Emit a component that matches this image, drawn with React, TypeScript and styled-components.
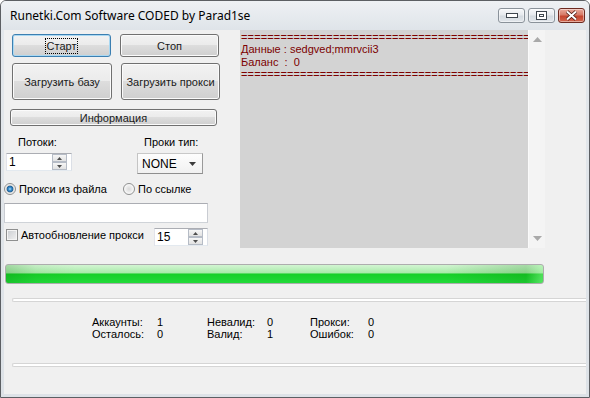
import styled, { createGlobalStyle } from 'styled-components';

const GlobalStyle = createGlobalStyle`
  html, body {
    margin: 0;
    padding: 0;
    background: #ffffff;
  }
  body {
    font-family: "Liberation Sans", Arial, sans-serif;
    font-size: 11px;
    color: #000;
  }
  * {
    box-sizing: border-box;
  }
`;

const Window = styled.div`
  width: 590px;
  height: 398px;
  border: 1px solid #5c5f63;
  border-radius: 6px 6px 0 0;
  background: linear-gradient(#e4e8ec, #dde2e7);
  display: flex;
  flex-direction: column;
  overflow: hidden;
`;

const TitleBar = styled.div`
  height: 29px;
  flex: none;
  display: flex;
  align-items: flex-start;
  padding-left: 9px;
  background: linear-gradient(#eef1f4, #dfe4e9);
`;

const Title = styled.span`
  margin-top: 6px;
  font-family: "Noto Sans", "Open Sans", sans-serif;
  font-size: 12px;
  line-height: 17px;
  color: #000;
`;

const Caption = styled.div`
  margin-left: auto;
  margin-top: 7px;
  margin-right: 4px;
  display: flex;
  gap: 3px;
`;

const CaptionButton = styled.div<{ $close?: boolean }>`
  width: 27px;
  height: 15px;
  border-radius: 3px;
  border: 1px solid ${(p) => (p.$close ? '#6c2a20' : '#8a929a')};
  background: ${(p) =>
    p.$close
      ? 'linear-gradient(#e9a99b, #d77a66 45%, #c5452f 55%, #d2674f)'
      : 'linear-gradient(#f7f8fa, #e6eaee 45%, #d4dae0 55%, #e2e7ec)'};
  box-shadow: inset 0 0 0 1px rgba(255, 255, 255, 0.45);
  display: flex;
  align-items: center;
  justify-content: center;
`;

const Client = styled.div`
  flex: 1;
  margin: 0 3px 3px;
  background: #f0f0f0;
  display: flex;
  flex-direction: column;
`;

const Top = styled.div`
  display: flex;
  height: 218px;
  flex: none;
`;

const LeftPanel = styled.div`
  width: 236px;
  display: flex;
  flex-direction: column;
`;

const Row = styled.div<{ $top: number; $left?: number; $gap?: number }>`
  display: flex;
  align-items: flex-start;
  margin-top: ${(p) => p.$top}px;
  padding-left: ${(p) => p.$left ?? 0}px;
  gap: ${(p) => p.$gap ?? 0}px;
`;

const Button = styled.button<{ $w: number; $h: number; $default?: boolean }>`
  width: ${(p) => p.$w}px;
  height: ${(p) => p.$h}px;
  padding: 0;
  border: 1px solid ${(p) => (p.$default ? '#3c7fb1' : '#707070')};
  border-radius: 3px;
  background: linear-gradient(#f2f2f2 0%, #ebebeb 49%, #dddddd 50%, #cfcfcf 100%);
  box-shadow: inset 0 0 0 1px ${(p) => (p.$default ? '#a9d8f2' : '#fbfbfb')};
  font-family: "Liberation Sans", Arial, sans-serif;
  font-size: 11px;
  color: #1a1a1a;
  display: flex;
  align-items: center;
  justify-content: center;
`;

const FocusRect = styled.span`
  border: 1px dotted #000;
  padding: 1px 1px 0;
  line-height: 13px;
`;

const Label = styled.span<{ $w?: number }>`
  width: ${(p) => (p.$w ? `${p.$w}px` : 'auto')};
  line-height: 13px;
`;

const Spin = styled.div<{ $w: number }>`
  width: ${(p) => p.$w}px;
  height: 18px;
  display: flex;
  background: #fff;
  border: 1px solid;
  border-color: #abadb3 #dbdfe6 #e3e9ef #e2e3ea;
`;

const SpinValue = styled.span`
  flex: 1;
  padding-left: 2px;
  font-size: 12px;
  line-height: 16px;
`;

const SpinButtons = styled.div`
  width: 15px;
  margin: 0 4px 0 0;
  display: flex;
  flex-direction: column;
`;

const SpinPart = styled.div`
  flex: 1;
  border: 1px solid #b6bcc6;
  background: linear-gradient(#f6f6f6, #e2e2e2);
  display: flex;
  align-items: center;
  justify-content: center;
`;

const Combo = styled.div`
  width: 66px;
  height: 21px;
  border: 1px solid;
  border-color: #c8c8c8 #9a9a9a #8f8f8f #c4c4c4;
  background: linear-gradient(#fdfdfd, #f1f1f1);
  display: flex;
  align-items: center;
  padding: 0 6px 0 4px;
  font-size: 12px;
`;

const ComboArrow = styled.span`
  margin-left: auto;
  display: flex;
`;

const Option = styled.label<{ $w?: number; $left?: number }>`
  width: ${(p) => (p.$w ? `${p.$w}px` : 'auto')};
  padding-left: ${(p) => p.$left ?? 0}px;
  display: flex;
  align-items: center;
  gap: 3px;
  line-height: 14px;
`;

const Radio = styled.span<{ $checked?: boolean }>`
  width: 12px;
  height: 12px;
  flex: none;
  border-radius: 50%;
  border: 1px solid #8e8f8f;
  background: ${(p) =>
    p.$checked
      ? 'radial-gradient(circle closest-side, #a8e0fb 0, #3a8ccc 1.6px, #1c5a8e 3.3px, #d6d6d6 3.6px, #f7f7f7 5px)'
      : 'radial-gradient(circle closest-side, #d9d9d9 0, #ececec 3px, #fbfbfb 5px)'};
`;

const Check = styled.span`
  width: 12px;
  height: 12px;
  flex: none;
  border: 1px solid #8e8f8f;
  background: linear-gradient(135deg, #c9ccd0, #f2f2f2);
  box-shadow: inset 0 0 0 1px #f4f4f4;
`;

const TextBox = styled.div`
  width: 204px;
  height: 20px;
  background: #fff;
  border: 1px solid;
  border-color: #abadb3 #c9ccd2 #cfd3d8 #c9ccd2;
`;

const Memo = styled.div`
  width: 305px;
  height: 218px;
  display: flex;
`;

const MemoText = styled.div`
  width: 288px;
  background: #d3d3d3;
  padding: 1px 0 0 1px;
  color: #7c0000;
  font-size: 11px;
  line-height: 12.4px;
`;

const MemoLine = styled.div<{ $rule?: boolean }>`
  white-space: pre;
  letter-spacing: ${(p) => (p.$rule ? '0.14px' : 'normal')};
`;

const ScrollBar = styled.div`
  width: 17px;
  border-left: 1px solid #fafafa;
  background: #f4f4f4;
  display: flex;
  flex-direction: column;
  justify-content: space-between;
  align-items: center;
  padding: 7px 0 7px;
`;

const Progress = styled.div`
  margin: 16px 0 0 1px;
  width: 539px;
  height: 20px;
  flex: none;
  border: 1px solid #adadad;
  border-radius: 3px;
  background:
    linear-gradient(90deg, rgba(0, 110, 0, 0.22) 0, rgba(0, 110, 0, 0.05) 30px, transparent 70px, transparent 440px, rgba(0, 110, 0, 0.2) 520px, rgba(150, 240, 150, 0.4) 535px),
    linear-gradient(#d2f5d2 0%, #a8eaa8 44%, #17cf28 50%, #22db3a 100%);
`;

const GroupLine = styled.div<{ $top: number }>`
  margin-top: ${(p) => p.$top}px;
  margin-left: 8px;
  height: 4px;
  flex: none;
  border: 1px solid #d5d5d5;
  border-right: none;
  border-radius: 3px 0 0 3px;
  background: #fff;
`;

const Stats = styled.div`
  margin-top: 14px;
  padding-left: 88px;
  display: grid;
  grid-template-columns: 65px 50px 60px 43px 58px auto;
  line-height: 12px;
`;

const stats = [
  ['Аккаунты:', '1', 'Невалид:', '0', 'Прокси:', '0'],
  ['Осталось:', '0', 'Валид:', '1', 'Ошибок:', '0'],
];

const rule = '='.repeat(44);

function SpinBox({ width, value }: { width: number; value: string }) {
  return (
    <Spin $w={width}>
      <SpinValue>{value}</SpinValue>
      <SpinButtons>
        <SpinPart>
          <svg width="5" height="3" viewBox="0 0 5 3">
            <path d="M0 3 L2.5 0 L5 3Z" fill="#4d4d4d" />
          </svg>
        </SpinPart>
        <SpinPart>
          <svg width="5" height="3" viewBox="0 0 5 3">
            <path d="M0 0 L5 0 L2.5 3Z" fill="#4d4d4d" />
          </svg>
        </SpinPart>
      </SpinButtons>
    </Spin>
  );
}

export default function App() {
  return (
    <>
      <GlobalStyle />
      <Window>
        <TitleBar>
          <Title>Runetki.Com Software CODED by Parad1se</Title>
          <Caption>
            <CaptionButton>
              <svg width="12" height="5" viewBox="0 0 12 5">
                <rect x="0.5" y="0.5" width="11" height="4" fill="#fff" stroke="#3e464e" />
              </svg>
            </CaptionButton>
            <CaptionButton>
              <svg width="11" height="9" viewBox="0 0 11 9">
                <rect x="0.5" y="0.5" width="10" height="8" fill="#fff" stroke="#3e464e" />
                <rect x="3.5" y="3.5" width="4" height="2" fill="#fff" stroke="#3e464e" />
              </svg>
            </CaptionButton>
            <CaptionButton $close>
              <svg width="13" height="11" viewBox="0 0 13 11">
                <path d="M2 1.5 L11 9.5 M11 1.5 L2 9.5" stroke="#4a1810" strokeWidth="3.6" />
                <path d="M2 1.5 L11 9.5 M11 1.5 L2 9.5" stroke="#fff" strokeWidth="2" />
              </svg>
            </CaptionButton>
          </Caption>
        </TitleBar>
        <Client>
          <Top>
            <LeftPanel>
              <Row $top={4} $left={8} $gap={9}>
                <Button $w={99} $h={23} $default>
                  <FocusRect>Старт</FocusRect>
                </Button>
                <Button $w={99} $h={23}>
                  Стоп
                </Button>
              </Row>
              <Row $top={6} $left={8} $gap={9}>
                <Button $w={100} $h={37}>
                  Загрузить базу
                </Button>
                <Button $w={99} $h={37}>
                  Загрузить прокси
                </Button>
              </Row>
              <Row $top={9} $left={6}>
                <Button $w={207} $h={17}>
                  Информация
                </Button>
              </Row>
              <Row $top={10} $left={14}>
                <Label $w={126}>Потоки:</Label>
                <Label>Проки тип:</Label>
              </Row>
              <Row $top={4} $left={2} $gap={65}>
                <SpinBox width={66} value="1" />
                <Combo>
                  NONE
                  <ComboArrow>
                    <svg width="7" height="4" viewBox="0 0 7 4">
                      <path d="M0 0 L7 0 L3.5 4Z" fill="#3c3c3c" />
                    </svg>
                  </ComboArrow>
                </Combo>
              </Row>
              <Row $top={8}>
                <Option $w={119}>
                  <Radio $checked />
                  Прокси из файла
                </Option>
                <Option>
                  <Radio />
                  По ссылке
                </Option>
              </Row>
              <Row $top={7}>
                <TextBox />
              </Row>
              <Row $top={5}>
                <Option $w={150} $left={2}>
                  <Check />
                  Автообновление прокси
                </Option>
                <SpinBox width={54} value="15" />
              </Row>
            </LeftPanel>
            <Memo>
              <MemoText>
                <MemoLine $rule>{rule}</MemoLine>
                <MemoLine>Данные : sedgved;mmrvcii3</MemoLine>
                <MemoLine>Баланс  :  0</MemoLine>
                <MemoLine $rule>{rule}</MemoLine>
              </MemoText>
              <ScrollBar>
                <svg width="9" height="5" viewBox="0 0 9 5">
                  <path d="M0 5 L4.5 0 L9 5Z" fill="#a9a9a9" />
                </svg>
                <svg width="9" height="5" viewBox="0 0 9 5">
                  <path d="M0 0 L9 0 L4.5 5Z" fill="#a9a9a9" />
                </svg>
              </ScrollBar>
            </Memo>
          </Top>
          <Progress />
          <GroupLine $top={14} />
          <Stats>
            {stats.map((row, i) =>
              row.map((cell, j) => <span key={`${i}-${j}`}>{cell}</span>)
            )}
          </Stats>
          <GroupLine $top={23} />
        </Client>
      </Window>
    </>
  );
}
